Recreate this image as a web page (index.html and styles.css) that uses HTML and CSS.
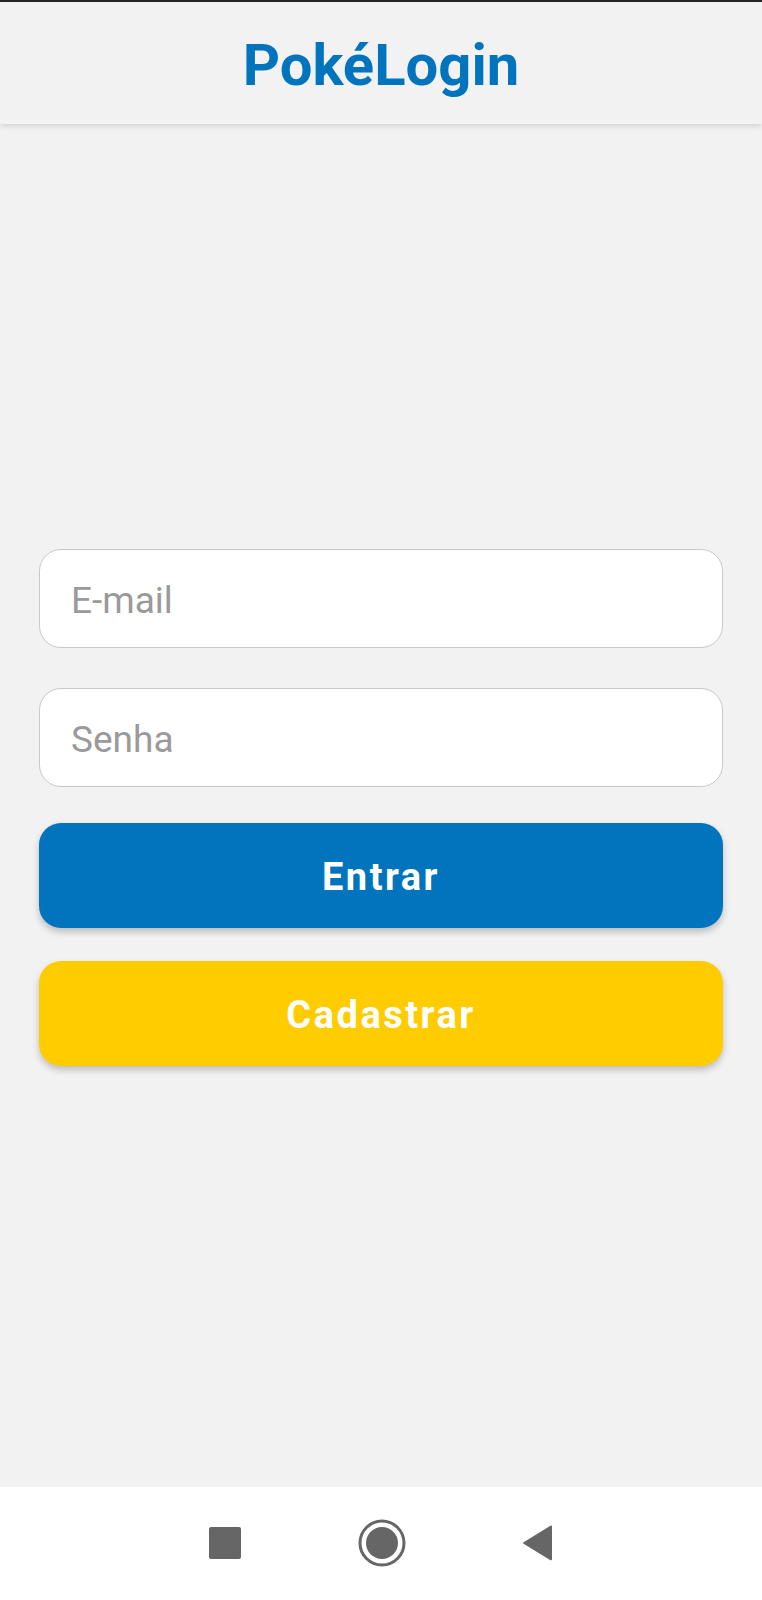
FILE: index.html
```html
<!DOCTYPE html>
<html lang="pt-BR">
<head>
<meta charset="utf-8">
<title>PokéLogin</title>
<link rel="stylesheet" href="styles.css">
</head>
<body>
<div class="app">
  <div class="status-line"></div>
  <header class="header">
    <h1 class="title">PokéLogin</h1>
  </header>
  <main class="main">
    <form class="form">
      <div class="field"><input class="input" type="email" placeholder="E-mail"></div>
      <div class="field field-last"><input class="input" type="password" placeholder="Senha"></div>
      <button type="button" class="btn btn-primary">Entrar</button>
      <button type="button" class="btn btn-secondary">Cadastrar</button>
    </form>
  </main>
  <nav class="navbar">
    <svg class="nav-icon" width="34" height="34" viewBox="0 0 34 34"><rect x="1" y="1" width="32" height="32" rx="2" fill="#666"/></svg>
    <svg class="nav-icon" width="48" height="48" viewBox="0 0 48 48"><circle cx="24" cy="24" r="22" fill="none" stroke="#666" stroke-width="3"/><circle cx="24" cy="24" r="16" fill="#666"/></svg>
    <svg class="nav-icon" width="34" height="38" viewBox="0 0 34 38"><path d="M31 2 L31 35 Q31 37 29 36 L3 20 Q1 19 3 18 L29 2 Q31 1 31 2 Z" fill="#666"/></svg>
  </nav>
</div>
</body>
</html>
```
FILE: styles.css
```css
* { box-sizing: border-box; }
html, body { margin: 0; padding: 0; }
body {
  background: #f2f2f2;
  font-family: Roboto, "Liberation Sans", sans-serif;
}
.app {
  width: 762px;
  height: 1600px;
  display: flex;
  flex-direction: column;
  overflow: hidden;
}
.status-line {
  height: 2px;
  background: #262626;
  flex: none;
}
.header {
  height: 122px;
  flex: none;
  background: #f2f2f2;
  display: flex;
  align-items: center;
  justify-content: center;
  box-shadow: 0 2px 6px rgba(0,0,0,0.14);
  position: relative;
  z-index: 1;
}
.title {
  margin: 0;
  font-size: 58px;
  font-weight: 700;
  color: #0274bd;
  line-height: 1;
  letter-spacing: 0;
  padding-top: 4px;
}
.main {
  flex: 1;
  display: flex;
  flex-direction: column;
  justify-content: center;
  padding: 0 39px;
}
.form {
  display: flex;
  flex-direction: column;
  padding-top: 4px;
}
.field { margin-bottom: 40px; }
.field-last { margin-bottom: 36px; }
.input {
  display: block;
  width: 100%;
  height: 99px;
  border: 1.5px solid #c9c9c9;
  border-radius: 22px;
  background: #fff;
  padding: 4px 0 0 31px;
  font-family: Roboto, "Liberation Sans", sans-serif;
  font-size: 37px;
  color: #333;
  outline: none;
}
.input::placeholder { color: #9a9a9a; }
.btn {
  display: block;
  width: 100%;
  height: 105px;
  border: none;
  border-radius: 22px;
  font-family: Roboto, "Liberation Sans", sans-serif;
  font-size: 38px;
  font-weight: 700;
  letter-spacing: 2.5px;
  color: #fff;
  box-shadow: 0 4px 7px rgba(0,0,0,0.22);
  padding: 3px 0 0;
}
.btn-primary { background: #0274bd; margin-bottom: 33px; }
.btn-secondary { background: #ffcc00; }
.navbar {
  height: 113px;
  flex: none;
  background: #fff;
  display: flex;
  align-items: center;
  justify-content: center;
  gap: 0;
  padding-bottom: 2px;
}
.nav-icon { display: block; }
.nav-icon:nth-child(1) { margin-right: 116px; }
.nav-icon:nth-child(3) { margin-left: 115px; }
```
